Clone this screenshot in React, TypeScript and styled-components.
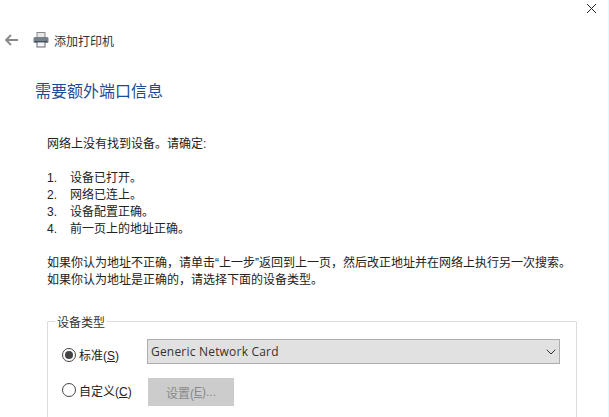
import * as React from 'react'
import styled, { createGlobalStyle } from 'styled-components'
import { ChevronDown } from 'lucide-react'

const GlobalStyle = createGlobalStyle`
    html, body {
        margin: 0;
        padding: 0;
        height: 100%;
        background: #fff;
        overflow: hidden;
    }
    body {
        font-family: "Liberation Sans", "Noto Sans CJK SC", sans-serif;
        font-size: 12px;
        color: #222;
    }
`

const Wizard = styled.div`
    position: relative;
    box-sizing: border-box;
    width: 609px;
    height: 417px;
    overflow: hidden;
    border-right: 1px solid #e4fbfb;
`

const CloseButton = styled.div`
    position: absolute;
    top: 3px;
    right: 11px;
    width: 11px;
    height: 11px;
`

const Header = styled.div`
    display: flex;
    align-items: center;
    height: 20px;
    padding: 30px 0 0 5px;
    font-size: 12px;
    color: #333;
`

const BackIcon = styled.svg`
    width: 13px;
    height: 12px;
    margin-right: 15px;
`

const PrinterIcon = styled.svg`
    width: 16px;
    height: 16px;
    margin-right: 5px;
`

const Content = styled.div`
    padding: 32px 33px 0 35px;
`

const Heading = styled.div`
    font-size: 16px;
    line-height: 20px;
    color: #1c4c94;
`

const Body = styled.div`
    margin: 34px 0 0 12px;
    line-height: 17px;
`

const Paragraph = styled.p`
    margin: 0 0 17px;
    white-space: nowrap;
`

const List = styled.ol`
    list-style: none;
    margin: 0 0 17px;
    padding: 0;
`

const ListItem = styled.li`
    display: flex;
`

const ListNumber = styled.span`
    width: 23px;
`

const GroupBox = styled.fieldset`
    box-sizing: border-box;
    width: 530px;
    margin: 23px 0 0 12px;
    padding: 9px 16px 0 14px;
    height: 122px;
    border: 1px solid #dcdcdc;
    border-radius: 1px;
`

const Legend = styled.legend`
    padding: 4px 2px 0;
    margin-left: -7px;
    line-height: 14px;
    color: #333;
`

const Row = styled.div<{ $gap?: number }>`
    display: flex;
    align-items: center;
    margin-bottom: ${({ $gap }) => $gap ?? 0}px;
`

const RadioLabel = styled.label<{ $shift: number }>`
    display: flex;
    align-items: center;
    width: 85px;
    flex: none;
    margin-top: ${({ $shift }) => Math.max($shift, 0)}px;
    margin-bottom: ${({ $shift }) => Math.max(-$shift, 0)}px;
`

const RadioCircle = styled.span<{ $checked?: boolean }>`
    box-sizing: border-box;
    display: flex;
    align-items: center;
    justify-content: center;
    width: 14px;
    height: 14px;
    margin-right: 3px;
    border: 1px solid #444;
    border-radius: 50%;

    &::after {
        content: '';
        display: ${({ $checked }) => ($checked ? 'block' : 'none')};
        width: 8px;
        height: 8px;
        border-radius: 50%;
        background: #444;
    }
`

const Underlined = styled.span`
    text-decoration: underline;
`

const Select = styled.div`
    box-sizing: border-box;
    display: flex;
    align-items: center;
    justify-content: space-between;
    width: 413px;
    height: 25px;
    padding: 0 0 0 3px;
    background: #e1e1e1;
    border: 1px solid #adadad;
    font-family: "Open Sans", sans-serif;
    font-size: 12px;
    letter-spacing: 0.2px;
    color: #333;
`

const DisabledButton = styled.div`
    display: flex;
    align-items: center;
    justify-content: center;
    width: 86px;
    height: 28px;
    margin-left: 1px;
    background: #cccccc;
    color: #8a8a8a;
`

const App: React.FunctionComponent = (): React.ReactElement => {
    return (
        <Wizard>
            <GlobalStyle />
            <CloseButton>
                <svg width="11" height="11" viewBox="0 0 11 11">
                    <path d="M1 1 L10 10 M10 1 L1 10" stroke="#222" strokeWidth="1" fill="none" />
                </svg>
            </CloseButton>
            <Header>
                <BackIcon viewBox="0 0 13 12">
                    <path d="M6 1 L1 6 L6 11 M1 6 H13" stroke="#888" strokeWidth="1.8" fill="none" />
                </BackIcon>
                <PrinterIcon viewBox="0 0 16 16">
                    <rect x="4" y="0.5" width="8" height="5" fill="#e8e8e8" stroke="#8a8a8a" />
                    <rect x="0.5" y="5" width="15" height="6" rx="1.5" fill="#74808a" />
                    <rect x="2" y="9" width="12" height="1" fill="#39424a" />
                    <rect x="4" y="10" width="8" height="5" fill="#f4f4f4" stroke="#667" />
                </PrinterIcon>
                添加打印机
            </Header>
            <Content>
                <Heading>需要额外端口信息</Heading>
                <Body>
                    <Paragraph>网络上没有找到设备。请确定:</Paragraph>
                    <List>
                        {['设备已打开。', '网络已连上。', '设备配置正确。', '前一页上的地址正确。'].map((item: string, i: number) => (
                            <ListItem key={i.toString()}>
                                <ListNumber>{i + 1}.</ListNumber>
                                {item}
                            </ListItem>
                        ))}
                    </List>
                    <Paragraph>
                        如果你认为地址不正确，请单击“上一步”返回到上一页，然后改正地址并在网络上执行另一次搜索。
                        <br />
                        如果你认为地址是正确的，请选择下面的设备类型。
                    </Paragraph>
                </Body>
                <GroupBox>
                    <Legend>设备类型</Legend>
                    <Row $gap={14}>
                        <RadioLabel $shift={6}>
                            <RadioCircle $checked />
                            <span>标准(<Underlined>S</Underlined>)</span>
                        </RadioLabel>
                        <Select>
                            Generic Network Card
                            <ChevronDown size={16} color="#333" strokeWidth={1.5} />
                        </Select>
                    </Row>
                    <Row>
                        <RadioLabel $shift={-4}>
                            <RadioCircle />
                            <span>自定义(<Underlined>C</Underlined>)</span>
                        </RadioLabel>
                        <DisabledButton>设置(<Underlined>E</Underlined>)...</DisabledButton>
                    </Row>
                </GroupBox>
            </Content>
        </Wizard>
    )
}

export default App
